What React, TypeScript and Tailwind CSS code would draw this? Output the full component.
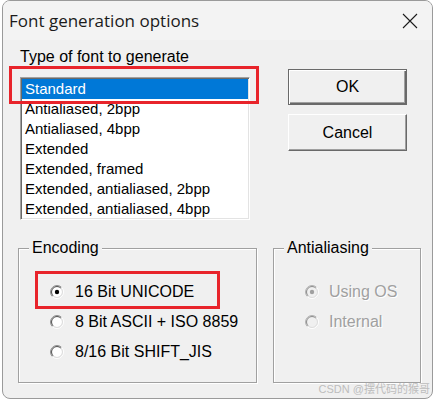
import React from 'react';

const fontTypes = [
  'Standard',
  'Antialiased, 2bpp',
  'Antialiased, 4bpp',
  'Extended',
  'Extended, framed',
  'Extended, antialiased, 2bpp',
  'Extended, antialiased, 4bpp',
];

const encodings = ['16 Bit UNICODE', '8 Bit ASCII + ISO 8859', '8/16 Bit SHIFT_JIS'];
const antialiasing = ['Using OS', 'Internal'];

// classic 3D radio button, drawn as two half rings
const Radio: React.FC<{ checked?: boolean; disabled?: boolean }> = ({ checked, disabled }) => {
  const c = 7;
  const half = (r: number) => {
    const d = r * 0.7071;
    return {
      tl: `M ${c - d} ${c + d} A ${r} ${r} 0 0 1 ${c + d} ${c - d}`,
      br: `M ${c + d} ${c - d} A ${r} ${r} 0 0 1 ${c - d} ${c + d}`,
    };
  };
  const outer = half(6.5);
  const inner = half(5.5);
  return (
    <svg width="14" height="14" viewBox="0 0 14 14" className="shrink-0">
      <circle cx={c} cy={c} r="5" fill={disabled ? '#f0f0f0' : '#ffffff'} />
      <path d={outer.tl} fill="none" stroke={disabled ? '#b0b0b0' : '#8c8c8c'} strokeWidth="1" />
      <path d={outer.br} fill="none" stroke="#ffffff" strokeWidth="1" />
      <path d={inner.tl} fill="none" stroke={disabled ? '#8a8a8a' : '#505050'} strokeWidth="1" />
      <path d={inner.br} fill="none" stroke="#dcdcdc" strokeWidth="1" />
      {checked && <circle cx={c} cy={c} r="2.2" fill={disabled ? '#a0a0a0' : '#000000'} />}
    </svg>
  );
};

const GroupBox: React.FC<{ title: string; width: string; children: React.ReactNode }> = ({ title, width, children }) => (
  <div
    className={`relative ${width} border border-[#a0a0a0] shadow-[inset_1px_1px_0_#ffffff,1px_1px_0_#ffffff] pl-[31px] pt-[28px] pb-[15px]`}
  >
    <span className="absolute left-[10px] top-[-11px] px-[3px] bg-[#f0f0f0] text-[16px] leading-[20px] text-black">
      {title}
    </span>
    {children}
  </div>
);

export default function App() {
  return (
    <div className="w-[435px] h-[401px] bg-white px-[2px] pb-[2px] font-['Liberation_Sans',Arial,sans-serif]">
      <div className="relative flex flex-col h-full border border-[#9a9a9a] rounded-[8px] bg-[#f0f0f0] overflow-hidden">
        {/* title bar */}
        <div className="h-[39px] shrink-0 flex items-center justify-between bg-[#f3f3f3] pl-[6px] pr-[14px]">
          <span className="font-['Open_Sans',sans-serif] text-[17px] text-[#1b1b1b]">Font generation options</span>
          <svg width="16" height="16" viewBox="0 0 16 16">
            <path d="M1 1 L15 15 M15 1 L1 15" stroke="#1b1b1b" strokeWidth="1.1" fill="none" />
          </svg>
        </div>

        <div className="flex flex-col pl-[17px] pt-[7px]">
          <div className="flex">
            <div className="flex flex-col">
              <div className="h-[20px] text-[16px] leading-[20px] text-black">Type of font to generate</div>
              <div className="mt-[10px] w-[230px] h-[143px] bg-white border border-t-[#a0a0a0] border-l-[#a0a0a0] border-r-white border-b-white shadow-[inset_1px_1px_0_#696969,inset_-1px_-1px_0_#e3e3e3] p-px overflow-hidden">
                {fontTypes.map((t, i) => (
                  <div
                    key={t}
                    className={`h-[20px] pl-[3px] text-[15px] leading-[20px] whitespace-nowrap ${
                      i === 0 ? 'bg-[#0078d7] text-white' : 'text-black'
                    }`}
                  >
                    {t}
                  </div>
                ))}
              </div>
            </div>

            <div className="ml-[38px] pt-[22px] flex flex-col gap-[9px]">
              <button className="w-[119px] h-[36px] border border-[#6a6a6a] bg-[#f0f0f0] shadow-[inset_1px_1px_0_#ffffff,inset_-1px_-1px_0_#696969,inset_-2px_-2px_0_#a0a0a0] text-[16px] text-black">
                OK
              </button>
              <button className="w-[119px] h-[37px] border border-t-white border-l-white border-r-[#696969] border-b-[#696969] bg-[#f0f0f0] shadow-[inset_-1px_-1px_0_#a0a0a0] text-[16px] text-black">
                Cancel
              </button>
            </div>
          </div>

          <div className="flex gap-[16px] mt-[28px] ml-[-2px]">
            <GroupBox title="Encoding" width="w-[239px]">
              {encodings.map((e, i) => (
                <div key={e} className="h-[30px] flex items-center gap-[11px] text-[16px] text-black whitespace-nowrap">
                  <Radio checked={i === 0} />
                  <span>{e}</span>
                </div>
              ))}
            </GroupBox>
            <GroupBox title="Antialiasing" width="w-[148px]">
              {antialiasing.map((a, i) => (
                <div
                  key={a}
                  className="h-[30px] flex items-center gap-[10px] text-[16px] text-[#a0a0a0] [text-shadow:1px_1px_0_#ffffff] whitespace-nowrap"
                >
                  <Radio checked={i === 0} disabled />
                  <span>{a}</span>
                </div>
              ))}
            </GroupBox>
          </div>
        </div>

        {/* red annotation boxes */}
        <div className="absolute left-[6px] top-[65px] w-[250px] h-[38px] border-[3px] border-[#e8242b]" />
        <div className="absolute left-[32px] top-[270px] w-[185px] h-[38px] border-[3px] border-[#e8242b]" />

        {/* watermark */}
        <div className="absolute right-[2px] bottom-[3px] text-[11px] leading-[12px] text-[#bdbdbd] font-['Liberation_Sans','Noto_Sans_CJK_SC',sans-serif] whitespace-nowrap">
          CSDN @摆代码的猴哥
        </div>
      </div>
    </div>
  );
}
